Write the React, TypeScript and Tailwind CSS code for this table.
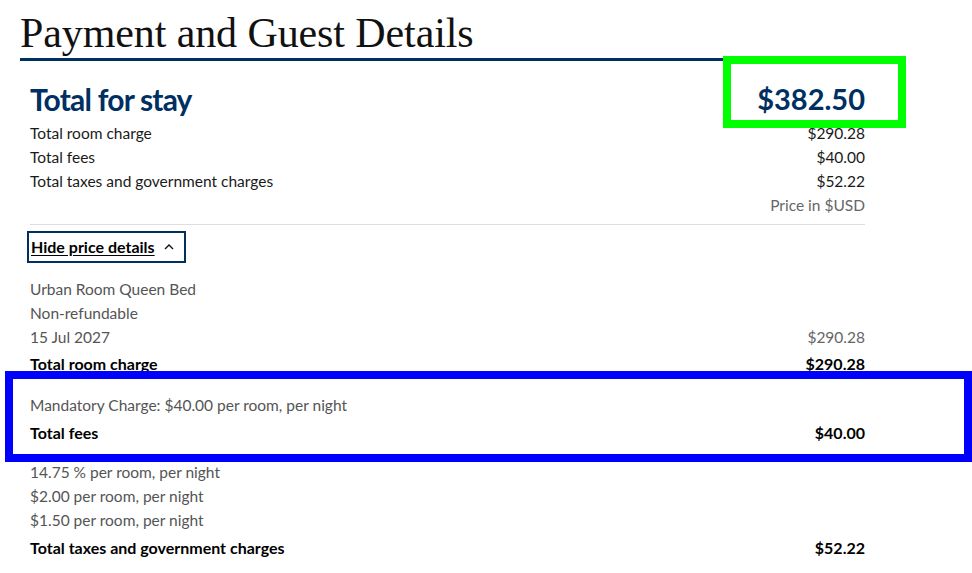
import React from 'react'

const navy = 'text-[#002f61]'

const Row = ({ label, amount, muted, bold }: { label: string, amount?: string, muted?: boolean, bold?: boolean }) => (
    <div className={`flex justify-between h-6 items-center ${bold ? 'text-[16px] font-bold text-black' : muted ? 'text-[15.5px] text-[#555]' : 'text-[15.5px] text-[#1a1a1a]'}`}>
        <span>{label}</span>
        {amount && <span className={bold ? '' : muted ? 'text-[#666]' : ''}>{amount}</span>}
    </div>
)

const App = () => {
    return (
        <div className="relative w-[972px] h-[573px] overflow-hidden bg-white" style={{ fontFamily: 'Lato, "Noto Sans", sans-serif' }}>
            <div className="pl-5 pt-[10px] w-[875px]">
                <h1 className="text-[42px] leading-[46px] text-[#111] font-['Liberation_Serif',serif] tracking-[-0.1px]">Payment and Guest Details</h1>
                <div className="h-[3px] bg-[#002f61] mt-[2px]" />
                <div className="pl-[10px] pr-[10px]">
                    <div className={`flex justify-between items-end mt-[23px] font-bold ${navy}`}>
                        <span className="text-[30px] leading-[30px] tracking-[-0.8px]">Total for stay</span>
                        <span className="text-[29px] leading-[30px]">$382.50</span>
                    </div>
                    <div className="mt-[8px]">
                        <Row label="Total room charge" amount="$290.28" />
                        <Row label="Total fees" amount="$40.00" />
                        <Row label="Total taxes and government charges" amount="$52.22" />
                        <div className="flex justify-end h-6 items-center text-[15.5px] text-[#666]">Price in $USD</div>
                    </div>
                    <div className="h-px bg-[#ddd] mt-[6px]" />
                    <button className="mt-[6px] -ml-[3px] h-[32px] px-[2px] border-2 border-[#002f61] flex items-center gap-[7px] text-[16px] font-bold text-black">
                        <span className="underline underline-offset-2">Hide price details</span>
                        <svg width="14" height="14" viewBox="0 0 14 14" fill="none" stroke="#111" strokeWidth="1.4" className="mr-[6px]">
                            <path d="M3 9 L7 5 L11 9" />
                        </svg>
                    </button>
                    <div className="mt-[15px]">
                        <Row label="Urban Room Queen Bed" muted />
                        <Row label="Non-refundable" muted />
                        <Row label="15 Jul 2027" amount="$290.28" muted />
                        <div className="mt-[2px]"><Row label="Total room charge" amount="$290.28" bold /></div>
                    </div>
                    <div className="mt-[18px]">
                        <Row label="Mandatory Charge: $40.00 per room, per night" muted />
                        <div className="mt-[3px]"><Row label="Total fees" amount="$40.00" bold /></div>
                    </div>
                    <div className="mt-[16px]">
                        <Row label="14.75 % per room, per night" muted />
                        <Row label="$2.00 per room, per night" muted />
                        <Row label="$1.50 per room, per night" muted />
                        <div className="mt-[3px]"><Row label="Total taxes and government charges" amount="$52.22" bold /></div>
                    </div>
                </div>
            </div>
            <div className="absolute left-[723px] top-[56px] w-[183px] h-[72px] border-[8px] border-[#00ff00]" />
            <div className="absolute left-[5px] top-[371px] w-[967px] h-[91px] border-[8px] border-[#0000ff]" />
        </div>
    )
}

export default App
